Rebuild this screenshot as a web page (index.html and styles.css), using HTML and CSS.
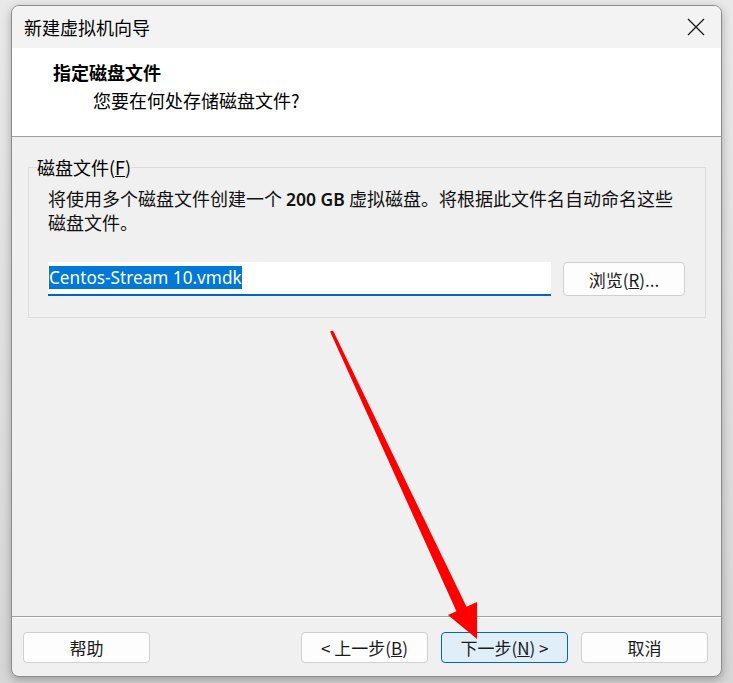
FILE: index.html
```html
<!DOCTYPE html>
<html lang="zh-CN">
<head>
<meta charset="utf-8">
<title>新建虚拟机向导</title>
<link rel="stylesheet" href="styles.css">
</head>
<body>
<div class="window">
  <div class="titlebar">
    <span class="title">新建虚拟机向导</span>
    <svg class="close" width="18" height="18" viewBox="0 0 18 18"><path d="M1 1 L17 17 M17 1 L1 17" stroke="#1a1a1a" stroke-width="1.3" fill="none"/></svg>
  </div>
  <div class="header">
    <div class="h-title">指定磁盘文件</div>
    <div class="h-sub">您要在何处存储磁盘文件?</div>
  </div>
  <div class="content">
    <fieldset class="group">
      <legend>磁盘文件(<u>F</u>)</legend>
      <div class="group-inner">
        <p class="desc">将使用多个磁盘文件创建一个 <span class="latin">200 GB</span> 虚拟磁盘。将根据此文件名自动命名这些<br>磁盘文件。</p>
        <div class="row">
          <div class="input"><span class="sel">Centos-Stream 10.vmdk</span></div>
          <button class="btn browse">浏览(<u>R</u>)...</button>
        </div>
      </div>
    </fieldset>
  </div>
  <div class="footer">
    <button class="btn">帮助</button>
    <div class="spacer"></div>
    <button class="btn">&lt; 上一步(<u>B</u>)</button>
    <button class="btn primary">下一步(<u>N</u>) &gt;</button>
    <button class="btn">取消</button>
  </div>
</div>
<svg class="arrow" width="733" height="683" viewBox="0 0 733 683">
  <polygon points="333,330.5 466.5,606.8 477,602 477,639 448,615 456.4,611.2 330,331.5" fill="#ff0000"/>
</svg>
</body>
</html>
```
FILE: styles.css
```css
html, body {
  margin: 0;
  padding: 0;
}
body {
  width: 733px;
  height: 683px;
  overflow: hidden;
  background: linear-gradient(#e9e9e9, #d6d6d6);
  padding: 5px 0 0 11px;
  box-sizing: border-box;
  font-family: "Noto Sans CJK SC", "Noto Sans", sans-serif;
  font-size: 18px;
  color: #000;
  position: relative;
}
.window {
  width: 711px;
  height: 672px;
  box-sizing: border-box;
  border: 1px solid #8c8c8c;
  border-radius: 8px;
  overflow: hidden;
  background: #f0f0f0;
  display: flex;
  flex-direction: column;
  box-shadow: 0 3px 10px rgba(0,0,0,0.28);
}
.titlebar {
  height: 42px;
  flex: none;
  background: #f3f3f3;
  display: flex;
  align-items: center;
  padding: 0 16px 0 12px;
}
.title {
  flex: 1;
  line-height: 24px;
  font-size: 18px;
}
.close {
  display: block;
}
.header {
  height: 89px;
  flex: none;
  box-sizing: border-box;
  background: #fff;
  border-bottom: 1px solid #a0a0a0;
  padding: 12px 0 0 41px;
}
.h-title {
  font-weight: bold;
  line-height: 24px;
  font-size: 18px;
}
.h-sub {
  margin-top: 4px;
  margin-left: 40px;
  line-height: 24px;
}
.content {
  flex: 1;
  padding: 18px 15px 0 16px;
}
.group {
  margin: 0;
  padding: 0 20px 21px 8px;
  border: 1px solid #dcdcdc;
  min-width: 0;
}
.group legend {
  padding: 0;
  line-height: 24px;
  font-size: 18px;
}
.group-inner {
  padding-left: 11px;
}
.desc {
  margin: 8px 0 0 0;
  line-height: 23px;
  font-size: 18px;
  color: #111;
}
.latin {
  font-family: "Noto Sans", sans-serif;
  font-weight: 600;
  font-size: 17.5px;
}
.row {
  display: flex;
  margin-top: 28px;
  gap: 12px;
}
.input {
  width: 503px;
  height: 34px;
  box-sizing: border-box;
  background: #fff;
  border-bottom: 2px solid #0067c0;
  padding: 1px 0 0 1px;
}
.sel {
  display: inline-block;
  background: #0078d7;
  color: #fff;
  font-family: "Noto Sans", sans-serif;
  font-size: 17.2px;
  line-height: 23px;
  height: 23px;
}
.btn {
  font-family: "Noto Sans CJK SC", "Noto Sans", sans-serif;
  font-size: 17px;
  background: #fdfdfd;
  border: 1px solid #d0d0d0;
  border-radius: 4px;
  color: #1a1a1a;
  padding: 0;
  box-sizing: border-box;
  width: 127px;
  height: 31px;
  line-height: 27px;
}
.browse {
  width: 122px;
  height: 34px;
}
.footer {
  flex: none;
  height: 60px;
  box-sizing: border-box;
  border-top: 1px solid #a0a0a0;
  box-shadow: inset 0 1px 0 #fff;
  display: flex;
  align-items: flex-start;
  padding: 15px 13px 0 11px;
  gap: 13px;
}
.spacer {
  flex: 1;
}
.primary {
  background: #e0eef9;
  border-color: #0067c0;
}
.arrow {
  position: absolute;
  left: 0;
  top: 0;
  pointer-events: none;
}
```
